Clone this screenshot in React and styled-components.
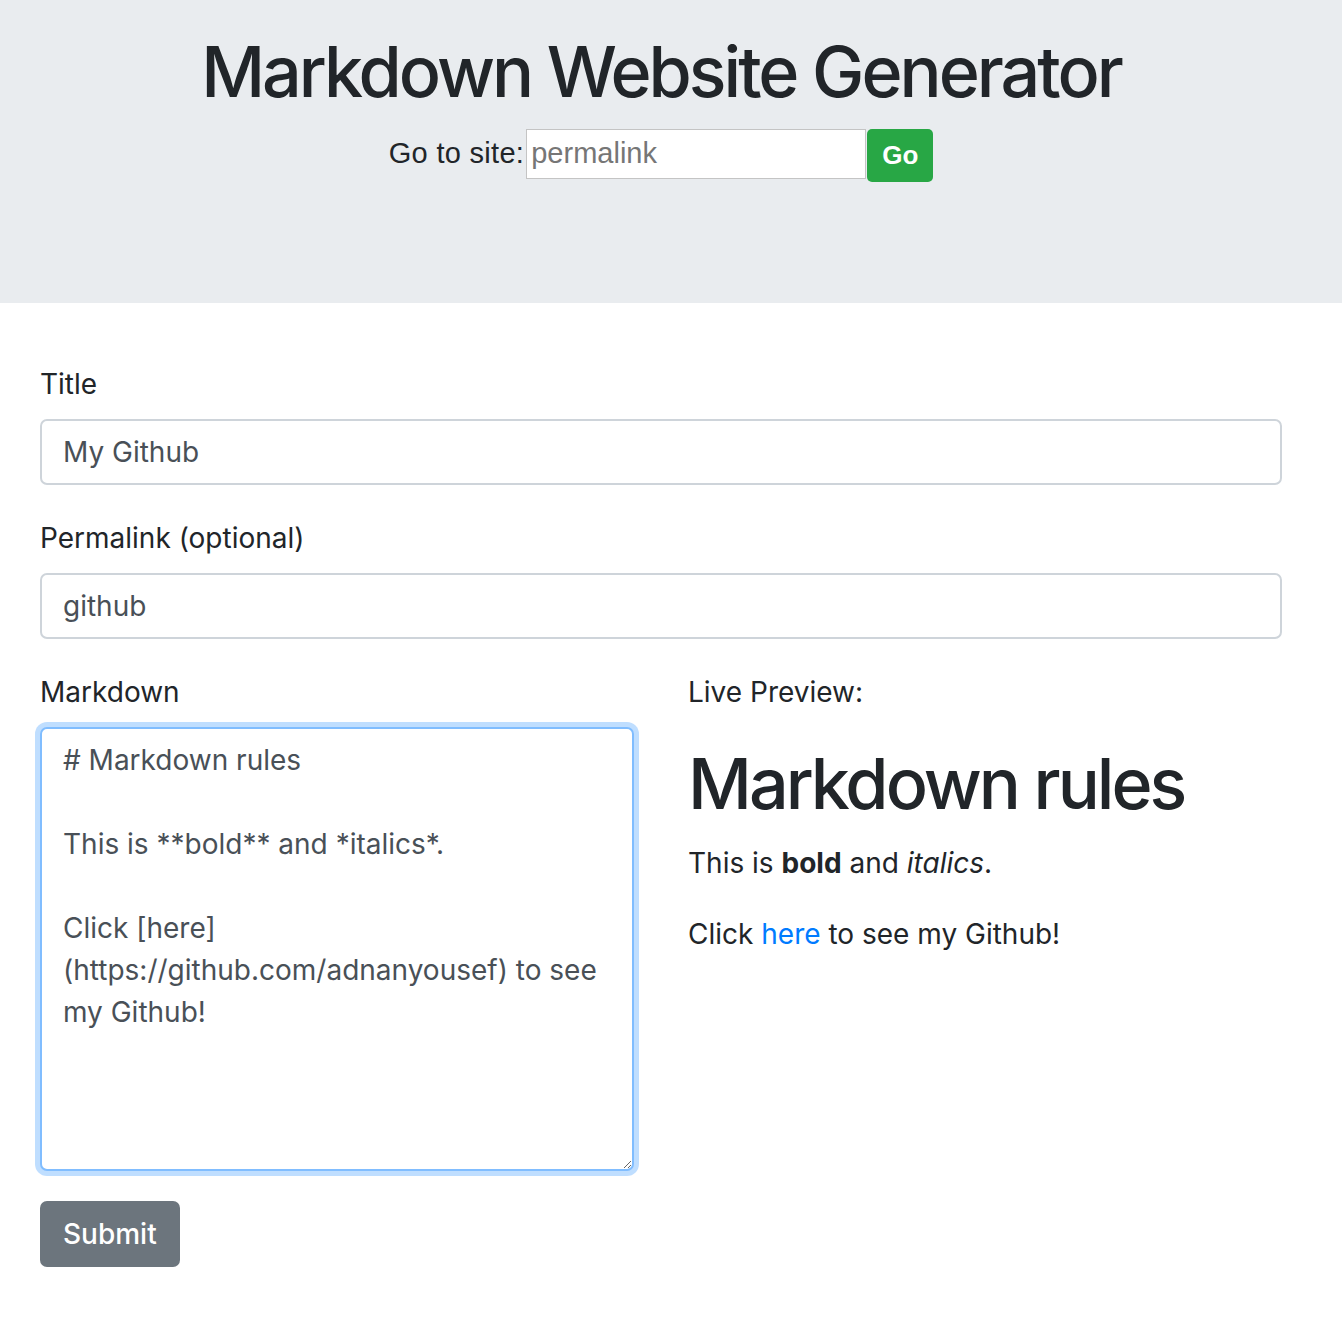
import React from "react";
import styled, { createGlobalStyle } from "styled-components";

const Global = createGlobalStyle`
  html, body { margin: 0; padding: 0; background: #fff; }
  body {
    font-family: Inter, "Liberation Sans", Arial, sans-serif;
    font-size: 28px;
    line-height: 1.5;
    color: #212529;
  }
  * { box-sizing: border-box; }
`;

const Header = styled.header`
  background: #e9ecef;
  height: 303px;
  padding: 30px 20px 0 0;
  display: flex;
  flex-direction: column;
  align-items: center;
`;

const HeaderTitle = styled.h1`
  margin: 0;
  font-size: 70px;
  font-weight: 500;
  line-height: 84px;
  letter-spacing: -3px;
  color: #212529;
`;

const GoRow = styled.form`
  display: flex;
  align-items: center;
  margin-top: 15px;
`;

const GoLabel = styled.span`
  font-family: "Liberation Sans", Arial, sans-serif;
  font-size: 29px;
  letter-spacing: 0.3px;
  color: #212529;
  margin-right: 2px;
  margin-top: -4px;
`;

const GoInput = styled.input`
  width: 340px;
  height: 50px;
  border: 1px solid #c4c4c4;
  background: #fff;
  padding: 0 4px;
  font-family: "Liberation Sans", Arial, sans-serif;
  font-size: 29px;
  color: #212529;
  outline: none;
  margin-top: -4px;
  &::placeholder { color: #767676; }
`;

const GoButton = styled.button`
  width: 66px;
  height: 53px;
  margin-left: 1px;
  border: none;
  border-radius: 5px;
  background: #28a745;
  color: #fff;
  font-family: "Liberation Sans", Arial, sans-serif;
  font-size: 26px;
  font-weight: 700;
  padding: 0;
`;

const Container = styled.main`
  padding: 60px 60px 60px 40px;
`;

const FormGroup = styled.div`
  margin-bottom: 32px;
`;

const Label = styled.label`
  display: block;
  line-height: 42px;
  margin-bottom: 14px;
  color: #212529;
`;

const TextInput = styled.input`
  display: block;
  width: 100%;
  height: 66px;
  padding: 0 21px;
  border: 2px solid #ced4da;
  border-radius: 7px;
  font-family: inherit;
  font-size: 28px;
  color: #495057;
  background: #fff;
  outline: none;
`;

const Row = styled.div`
  display: grid;
  grid-template-columns: 594px 1fr;
  column-gap: 54px;
`;

const TextArea = styled.textarea`
  display: block;
  width: 100%;
  height: 444px;
  padding: 10px 21px;
  border: 2px solid #80bdff;
  border-radius: 7px;
  box-shadow: 0 0 0 5px rgba(0, 123, 255, 0.25);
  font-family: inherit;
  font-size: 28px;
  line-height: 42px;
  color: #495057;
  background: #fff;
  outline: none;
  resize: both;
`;

const PreviewTitle = styled.h1`
  margin: 29px 0 16px;
  font-size: 70px;
  font-weight: 500;
  line-height: 84px;
  letter-spacing: -3px;
  color: #212529;
`;

const P = styled.p`
  margin: 0 0 29px;
  line-height: 42px;
`;

const Link = styled.a`
  color: #007bff;
  text-decoration: none;
`;

const SubmitButton = styled.button`
  margin-top: -2px;
  height: 66px;
  padding: 0 23px;
  border: none;
  border-radius: 7px;
  background: #6c757d;
  color: #fff;
  font-family: inherit;
  font-size: 28px;
  font-weight: 500;
`;

const md = `# Markdown rules

This is **bold** and *italics*.

Click [here](https://github.com/adnanyousef) to see my Github!`;

export default function App() {
  return (
    <>
      <Global />
      <Header>
        <HeaderTitle>Markdown Website Generator</HeaderTitle>
        <GoRow onSubmit={(e) => e.preventDefault()}>
          <GoLabel>Go to site:</GoLabel>
          <GoInput placeholder="permalink" />
          <GoButton type="submit">Go</GoButton>
        </GoRow>
      </Header>
      <Container>
        <FormGroup>
          <Label>Title</Label>
          <TextInput defaultValue="My Github" />
        </FormGroup>
        <FormGroup>
          <Label>Permalink (optional)</Label>
          <TextInput defaultValue="github" />
        </FormGroup>
        <Row>
          <FormGroup>
            <Label>Markdown</Label>
            <TextArea defaultValue={md} />
          </FormGroup>
          <div>
            <Label as="div">Live Preview:</Label>
            <PreviewTitle>Markdown rules</PreviewTitle>
            <P>
              This is <b>bold</b> and <i>italics</i>.
            </P>
            <P>
              Click <Link href="#">here</Link> to see my Github!
            </P>
          </div>
        </Row>
        <SubmitButton type="button">Submit</SubmitButton>
      </Container>
    </>
  );
}
